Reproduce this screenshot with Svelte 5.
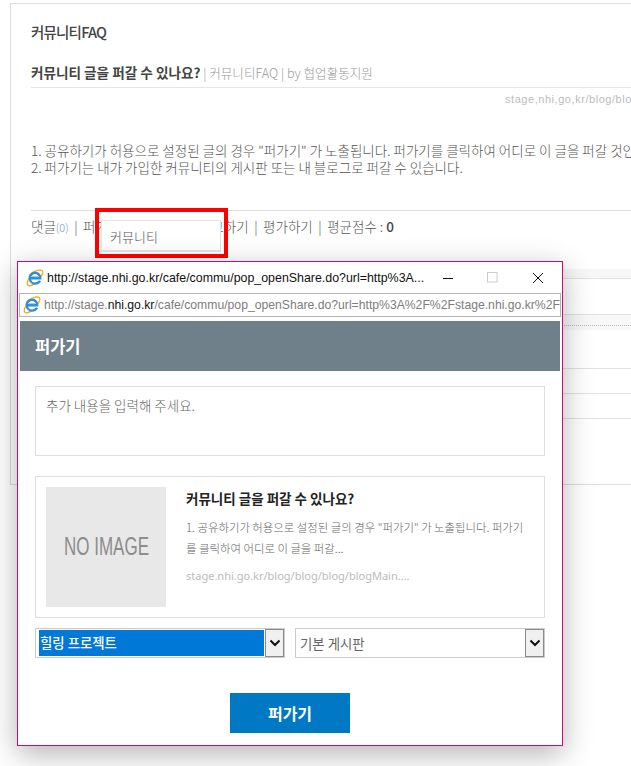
<script lang="ts">
  const bgLines = [
    { kind: "band", h: 9 },
    { kind: "plain", h: 35 },
    { kind: "dots", h: 15 },
    { kind: "plain", h: 38 },
    { kind: "plain", h: 24 },
    { kind: "plain", h: 24 },
  ];
</script>

{#snippet ieIcon()}
  <svg class="ie" width="18" height="18" viewBox="0 0 18 18" fill="none">
    <path d="M3 6.5C7 1.5 14.5.2 16.2 1.6c1.4 1.2.2 4-1.6 6.4" stroke="#f0b429" stroke-width="1.3"/>
    <path d="M3.5 8.5C1.4 12 .8 15.4 2 16.3c1.2.9 4 .2 6.5-1.4" stroke="#e9a820" stroke-width="1.3"/>
    <path d="M4.2 9.2h10C14.2 6 12 3.8 9.2 3.8 6.2 3.8 3.8 6.2 3.8 9.2s2.4 5.4 5.4 5.4c2.2 0 3.9-1 4.8-2.8" stroke="#2d8fd5" stroke-width="2.4"/>
    <path d="M6 7.6h6.2" stroke="#8cc8ee" stroke-width="1"/>
  </svg>
{/snippet}

<div class="page">
  <div class="panel">
    <h2>커뮤니티FAQ</h2>
    <div class="meta">
      <strong>커뮤니티 글을 퍼갈 수 있나요?</strong>
      <span>| 커뮤니티FAQ | by 협업활동지원</span>
    </div>
    <div class="url">stage,nhi,go,kr/blog/blog/blog/blogMain</div>
    <div class="body">
      <p>1. 공유하기가 허용으로 설정된 글의 경우 "퍼가기" 가 노출됩니다. 퍼가기를 클릭하여 어디로 이 글을 퍼갈 것인지</p>
      <p>2. 퍼가기는 내가 가입한 커뮤니티의 게시판 또는 내 블로그로 퍼갈 수 있습니다.</p>
    </div>
    <div class="actions">
      <span>댓글<em>(0)</em></span><i>|</i><span>퍼가기</span><i>|</i><span>공유하기</span><i>|</i><span>신고하기</span><i>|</i><span>평가하기</span><i>|</i><span>평균점수 : <b>0</b></span>
    </div>
    <div class="rows">
      {#each bgLines as row}
        <div class="row {row.kind}" style="height: {row.h}px"></div>
      {/each}
    </div>
  </div>

  <div class="highlight"></div>
  <div class="ctx">커뮤니티</div>

  <div class="win">
    <div class="titlebar">
      {@render ieIcon()}
      <span class="wintitle">http://stage.nhi.go.kr/cafe/commu/pop_openShare.do?url=http%3A...</span>
      <div class="winbtns">
        <svg width="12" height="12" viewBox="0 0 12 12"><path d="M1 6.5h10" stroke="#111" stroke-width="1"/></svg>
        <svg width="12" height="12" viewBox="0 0 12 12"><rect x=".5" y=".5" width="9.5" height="9.5" fill="none" stroke="#ccc"/></svg>
        <svg width="12" height="12" viewBox="0 0 12 12"><path d="M1 1l10 10M11 1L1 11" stroke="#111" stroke-width="1" fill="none"/></svg>
      </div>
    </div>
    <div class="addr">
      {@render ieIcon()}
      <span class="addrtext">http://stage.<b>nhi.go.kr</b>/cafe/commu/pop_openShare.do?url=http%3A%2F%2Fstage.nhi.go.kr%2F</span>
    </div>
    <div class="head">퍼가기</div>
    <div class="content">
      <div class="note">추가 내용을 입력해 주세요.</div>
      <div class="card">
        <div class="noimg"><span>NO IMAGE</span></div>
        <div class="cardtext">
          <div class="cardtitle">커뮤니티 글을 퍼갈 수 있나요?</div>
          <div class="carddesc">1. 공유하기가 허용으로 설정된 글의 경우 "퍼가기" 가 노출됩니다. 퍼가기를 클릭하여 어디로 이 글을 퍼갈...</div>
          <div class="cardurl">stage.nhi.go.kr/blog/blog/blog/blogMain....</div>
        </div>
      </div>
      <div class="selects">
        <div class="sel">
          <span class="val on">힐링 프로젝트</span>
          <span class="arrow"><svg width="12" height="8" viewBox="0 0 12 8"><path d="M1.5 1.5L6 6l4.5-4.5" fill="none" stroke="#111" stroke-width="2"/></svg></span>
        </div>
        <div class="sel">
          <span class="val">기본 게시판</span>
          <span class="arrow"><svg width="12" height="8" viewBox="0 0 12 8"><path d="M1.5 1.5L6 6l4.5-4.5" fill="none" stroke="#111" stroke-width="2"/></svg></span>
        </div>
      </div>
      <div class="btnwrap"><button>퍼가기</button></div>
    </div>
  </div>
</div>

<style>
  :global(body) {
    margin: 0;
    background: #fff;
    font-family: "Noto Sans CJK KR", "Noto Sans", sans-serif;
    overflow: hidden;
  }
  .page { position: relative; width: 631px; height: 766px; overflow: hidden; }

  .panel {
    position: absolute; left: 10px; top: 3px; width: 660px; height: 482px;
    border: 1px solid #ddd; padding: 0 0 0 20px; box-sizing: border-box;
    color: #555;
  }
  h2 { margin: 18px 0 0; height: 20px; font-size: 14.5px; line-height: 20px; font-weight: 500; letter-spacing: -.8px; color: #444; }
  .meta { margin-top: 21px; height: 24px; font-size: 12.6px; line-height: 18px; border-bottom: 1px solid #e5e5e5; color: #999; white-space: nowrap; font-weight: 300; }
  .meta strong { color: #444; font-weight: 700; font-size: 13.6px; }
  .url { margin-top: 4px; font: 11px/14px "Liberation Sans", sans-serif; color: #bbb; letter-spacing: .55px; white-space: nowrap; padding-left: 474px; }
  .body { margin-top: 36px; height: 68px; border-bottom: 1px solid #ddd; width: 640px; }
  .body p { margin: 0; font-size: 13.5px; line-height: 17px; white-space: nowrap; color: #555; font-weight: 300; }
  .actions { height: 42px; padding-top: 5px; box-sizing: border-box; font-size: 13.5px; line-height: 20px; color: #555; white-space: nowrap; font-weight: 300; }
  .actions em { font-style: normal; color: #7a94b8; font-size: 11px; }
  .actions i { font-style: normal; margin: 0 5.5px; color: #555; }
  .actions b { font-weight: 500; color: #444; }
  .rows { margin-top: 16px; }
  .row { border-bottom: 1px solid #e2e2e2; }
  .row.band { background: #f7f7f7; }
  .row.dots { border-bottom: 0; background: #f8f8f8; }
  .row.dots::after { content: ""; display: block; height: 10px; border-bottom: 1px dotted #bbb; }

  .highlight { position: absolute; left: 95px; top: 208px; width: 133px; height: 50px; border: 4px solid #f00; box-sizing: border-box; }
  .ctx {
    position: absolute; left: 101px; top: 220px; width: 120px; height: 32px;
    background: #fff; border: 1px solid #e3e3e3; border-bottom-width: 2px; box-sizing: border-box;
    padding-left: 8px; font-size: 13px; line-height: 32px; color: #555; font-weight: 300;
  }

  .win {
    position: absolute; left: 17px; top: 261px; width: 546px; height: 485px;
    box-sizing: border-box; border: 1px solid #c6097f; background: #fff;
    box-shadow: 0 8px 28px rgba(0,0,0,.3);
    display: flex; flex-direction: column;
  }
  .titlebar { height: 31px; display: flex; align-items: center; padding-left: 8px; flex: none; }
  .wintitle { margin-left: 3px; font: 12.4px "Liberation Sans", sans-serif; color: #111; white-space: nowrap; width: 386px; overflow: hidden; }
  .winbtns { display: flex; gap: 33px; margin-left: 9px; align-items: center; }
  .addr {
    flex: none; height: 24px; margin: 0 1px; border: 1px solid #b5b5b5; box-sizing: border-box;
    display: flex; align-items: center; padding-left: 3px; overflow: hidden;
  }
  .addrtext { margin-left: 3px; font: 12.2px "Liberation Sans", sans-serif; color: #7d7d7d; white-space: nowrap; }
  .addrtext b { font-weight: 400; color: #111; }
  .ie { flex: none; }
  .head {
    flex: none; margin: 4px 2px 0; height: 50px; background: #6f808b; color: #fff;
    font-size: 16.5px; font-weight: 700; line-height: 50px; padding-left: 15px;
  }
  .content { padding: 15px 17px 0; }
  .note { height: 70px; border: 1px solid #ddd; box-sizing: border-box; padding: 9px 10px; font-size: 13.5px; line-height: 18px; color: #666; font-weight: 300; }
  .card { margin-top: 20px; height: 142px; border: 1px solid #ddd; box-sizing: border-box; padding: 10px; display: flex; gap: 20px; }
  .noimg {
    flex: none; width: 120px; height: 120px; background: #e8e8e8; color: #8c8c8c;
    display: flex; align-items: center; justify-content: center;
    font: 25px/1 "Liberation Sans", sans-serif;
    white-space: nowrap;
    padding-bottom: 2px; box-sizing: border-box;
  }
  .noimg span { transform: scaleX(.68); }
  .cardtext { flex: 1; min-width: 0; padding-top: 1px; }
  .cardtitle { font-size: 13.5px; font-weight: 700; line-height: 20px; color: #222; }
  .carddesc { margin-top: 9px; font-size: 11.4px; line-height: 21px; color: #666; width: 345px; font-weight: 300; }
  .cardurl { margin-top: 10px; font: 11px/14px "Noto Sans", sans-serif; color: #bbb; white-space: nowrap; }
  .selects { margin-top: 10px; display: flex; gap: 10px; }
  .sel { flex: 1; height: 30px; border: 1px solid #ccc; box-sizing: border-box; display: flex; align-items: stretch; padding: 0 0 0 3px; }
  .val { flex: 1; display: block; font-size: 13.4px; line-height: 28px; color: #666; padding-left: 1px; white-space: nowrap; }
  .val.on { background: #0078d7; color: #fff; margin: 1px 1px 1px 0; line-height: 24px; font-weight: 500; }
  .arrow { flex: none; width: 19px; background: #f0f0f0; border: 1px solid #8a8a8a; box-sizing: border-box; display: flex; align-items: center; justify-content: center; }
  .btnwrap { margin-top: 35px; display: flex; justify-content: center; }
  button {
    width: 120px; height: 40px; border: 0; background: #0078c3; color: #fff;
    font: 700 16px "Noto Sans CJK KR", sans-serif;
  }
</style>
